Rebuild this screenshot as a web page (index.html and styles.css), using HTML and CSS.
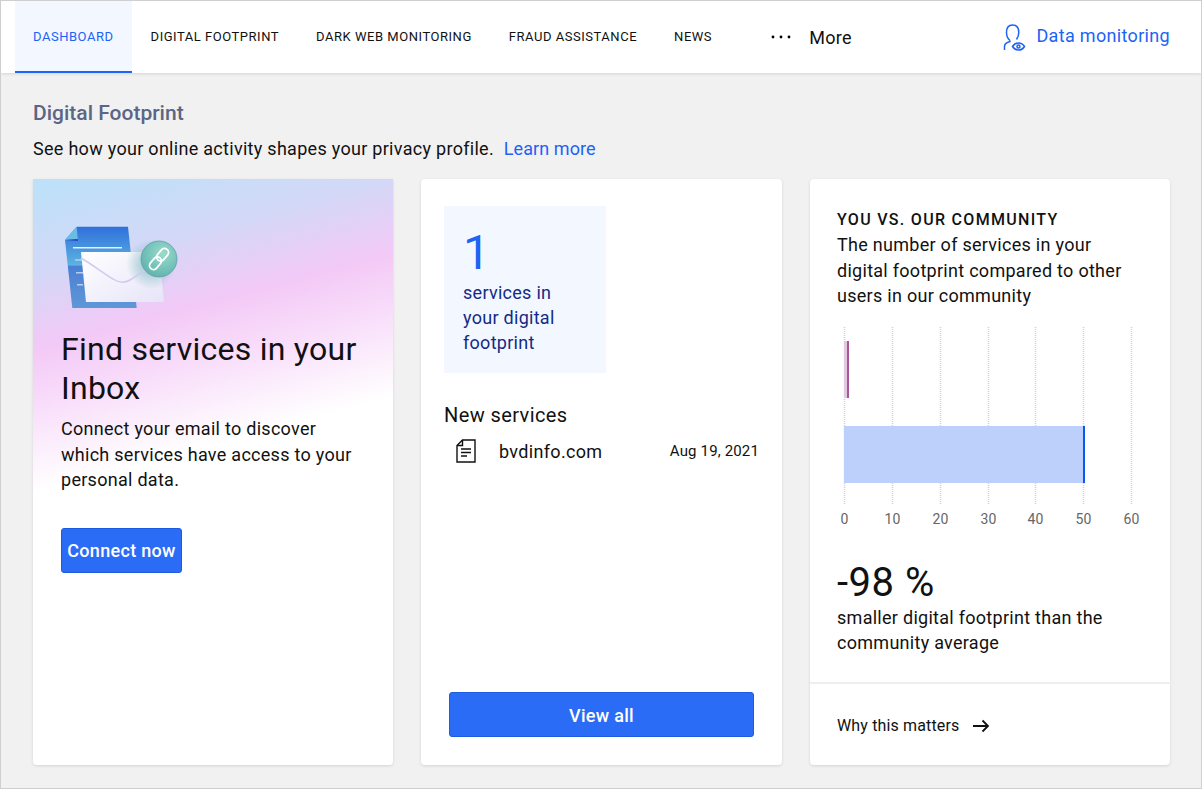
FILE: index.html
```html
<!DOCTYPE html>
<html lang="en">
<head>
    <meta charset="UTF-8">
    <title>Digital Footprint</title>
    <link rel="stylesheet" href="styles.css">
</head>
<body>
    <div class="window">
        <!-- Top navigation -->
        <nav class="topbar">
            <a class="tab active">Dashboard</a>
            <a class="tab">Digital Footprint</a>
            <a class="tab">Dark Web Monitoring</a>
            <a class="tab">Fraud Assistance</a>
            <a class="tab">News</a>
            <div class="more">
                <svg class="dots" width="20" height="4" viewBox="0 0 20 4"><circle cx="2" cy="2" r="1.4"/><circle cx="10" cy="2" r="1.4"/><circle cx="18" cy="2" r="1.4"/></svg>
                <span>More</span>
            </div>
            <a class="monitoring">
                <svg width="24" height="27" viewBox="0 0 24 27" fill="none" stroke="#1d63f5" stroke-width="1.5">
                    <path d="M7 16.500 C4.500 14.500 3.500 11.500 3.500 8.500 C3.500 4 5.500 1 9.500 1 C13.500 1 15.800 4 15.800 8.500 C15.800 11.500 14.800 13.500 13.500 15.500"/>
                    <path d="M7 16.500 L7 17.500 C3.500 18.500 1.500 20 1.500 22.500 L1.500 26"/>
                    <path d="M9.500 22.500 C11 20 13 19 15.500 19 C18 19 20 20 21.500 22.500 C20 25 18 26 15.500 26 C13 26 11 25 9.500 22.500 Z"/>
                    <circle cx="15.500" cy="22.500" r="1.500"/>
                </svg>
                <span>Data monitoring</span>
            </a>
        </nav>

        <main class="content">
            <h1 class="page-title">Digital Footprint</h1>
            <p class="page-intro">See how your online activity shapes your privacy profile. <a class="link">Learn more</a></p>

            <div class="cards">
                <!-- Inbox card -->
                <section class="card card-inbox">
                    <svg class="inbox-art" width="120" height="86" viewBox="0 0 120 86">
                        <defs>
                            <linearGradient id="docFill" x1="0" y1="0" x2="0" y2="1">
                                <stop offset="0" stop-color="#2f6fdc"/>
                                <stop offset="0.47" stop-color="#5cb4e0"/>
                                <stop offset="0.49" stop-color="#4a80d4"/>
                                <stop offset="1" stop-color="#5f97d6"/>
                            </linearGradient>
                            <linearGradient id="mailFill" x1="0" y1="0" x2="1" y2="1">
                                <stop offset="0" stop-color="#ffffff"/>
                                <stop offset="1" stop-color="#e6e4f8"/>
                            </linearGradient>
                            <radialGradient id="linkFill" cx="0.6" cy="0.35" r="0.7">
                                <stop offset="0" stop-color="#9adccb"/>
                                <stop offset="1" stop-color="#5fb2ae"/>
                            </radialGradient>
                            <radialGradient id="linkShade">
                                <stop offset="0.4" stop-color="#7fb8c0" stop-opacity="0.55"/>
                                <stop offset="1" stop-color="#7fb8c0" stop-opacity="0"/>
                            </radialGradient>
                        </defs>
                        <path d="M15.700 0.700 L67 0.700 L75.700 82 L11.300 82 L4 14 Z" fill="url(#docFill)"/>
                        <path d="M4 14 L15.700 0.700 L16.700 13 Z" fill="#6bbbe6"/>
                        <path d="M4 14 L16.700 13 L17 15 Z" fill="#2546c8"/>
                        <path d="M12 21.700 L61 21.700" stroke="#e4f2fb" stroke-width="1.500"/>
                        <path d="M14 34 L21 34 M15 46.700 L22 46.700 M16 58.700 L22 58.700" stroke="#b9cdf0" stroke-width="1.500"/>
                        <path d="M20 26 L98 26 L103 76 L25 76 Z" fill="url(#mailFill)"/>
                        <circle cx="90" cy="38" r="25" fill="url(#linkShade)"/>
                        <path d="M20 32 C32 39 42 47 52 53 C58 57 64 57 69 54 L84 44" fill="none" stroke="#cfcaf0" stroke-width="1.500"/>
                        <circle cx="98" cy="33" r="18" fill="url(#linkFill)" stroke="#5d9fa8" stroke-width="0.800"/>
                        <g fill="none" stroke="#ffffff" stroke-width="1.800" transform="rotate(-50 98 33)">
                            <rect x="85.500" y="29" width="14" height="8" rx="4"/>
                            <rect x="96.500" y="29" width="14" height="8" rx="4"/>
                        </g>
                    </svg>
                    <h2 class="inbox-title">Find services in your Inbox</h2>
                    <p class="inbox-text">Connect your email to discover which services have access to your personal data.</p>
                    <button class="btn btn-connect">Connect now</button>
                </section>

                <!-- Services card -->
                <section class="card card-services">
                    <div class="count-box">
                        <div class="count">1</div>
                        <div class="count-label">services in your digital footprint</div>
                    </div>
                    <h3 class="new-title">New services</h3>
                    <div class="service-row">
                        <svg width="20" height="24" viewBox="0 0 20 24" fill="none" stroke="#111" stroke-width="1.400">
                            <path d="M6.500 1 L19 1 L19 23 L1 23 L1 6.500 Z"/>
                            <path d="M6.500 1 L6.500 6.500 L1 6.500"/>
                            <path d="M5 10 L15 10 M5 13.500 L15 13.500 M5 17 L11 17"/>
                        </svg>
                        <span class="service-name">bvdinfo.com</span>
                        <span class="service-date">Aug 19, 2021</span>
                    </div>
                    <button class="btn btn-view">View all</button>
                </section>

                <!-- Community card -->
                <section class="card card-community">
                    <div class="community-body">
                        <h3 class="community-title">You vs. our community</h3>
                        <p class="community-text">The number of services in your digital footprint compared to other users in our community</p>
                        <svg class="chart" width="310" height="206" viewBox="0 0 310 206">
                            <g stroke="#ccccf5" stroke-width="1.500" stroke-dasharray="1 1">
                                <path d="M7.500 0 V177"/>
                                <path d="M55.500 0 V177"/>
                                <path d="M103.500 0 V177"/>
                                <path d="M151.500 0 V177"/>
                                <path d="M198.500 0 V177"/>
                                <path d="M246.500 0 V177"/>
                                <path d="M294.500 0 V177"/>
                            </g>
                            <rect x="7" y="14" width="5" height="57" fill="#e3c8e2"/>
                            <rect x="10" y="14" width="2" height="57" fill="#a8559c"/>
                            <rect x="7" y="99" width="241" height="57" fill="#b9ccfb" fill-opacity="0.95"/>
                            <rect x="246" y="99" width="2" height="57" fill="#0f55f0"/>
                            <g class="chart-label" text-anchor="middle">
                                <text x="7.500" y="197">0</text>
                                <text x="55.500" y="197">10</text>
                                <text x="103.500" y="197">20</text>
                                <text x="151.500" y="197">30</text>
                                <text x="198.500" y="197">40</text>
                                <text x="246.500" y="197">50</text>
                                <text x="294.500" y="197">60</text>
                            </g>
                        </svg>
                        <div class="percent">-98 %</div>
                        <p class="percent-text">smaller digital footprint than the community average</p>
                    </div>
                    <a class="why">
                        <span>Why this matters</span>
                        <svg width="18" height="14" viewBox="0 0 18 14" fill="none" stroke="#111" stroke-width="1.800"><path d="M1 7 H16 M10.500 1.500 L16 7 L10.500 12.500"/></svg>
                    </a>
                </section>
            </div>
        </main>
    </div>
</body>
</html>
```

FILE: styles.css
```css
* {
    box-sizing: border-box;
}

body {
    margin: 0;
    font-family: Roboto, "Liberation Sans", sans-serif;
    color: #111;
}

.window {
    width: 1202px;
    height: 789px;
    border: 1px solid #cfcfcf;
    background-color: #f1f1f1;
    overflow: hidden;
}

/* Top navigation */
.topbar {
    display: flex;
    align-items: stretch;
    height: 72px;
    padding-left: 14px;
    background-color: #fff;
    box-shadow: 0 1px 3px rgba(0, 0, 0, 0.12);
}

.tab {
    display: flex;
    align-items: center;
    padding: 0 18px;
    margin-right: 1px;
    border-bottom: 2px solid transparent;
    font-size: 13px;
    letter-spacing: 0.53px;
    text-transform: uppercase;
    color: #111;
}

.tab.active {
    color: #1d63f5;
    background-color: #f3f7ff;
    border-bottom-color: #1d63f5;
}

.more {
    display: flex;
    align-items: center;
    gap: 18px;
    margin-left: 40px;
    font-size: 18px;
    letter-spacing: 0.3px;
}

.monitoring {
    display: flex;
    align-items: center;
    gap: 9px;
    margin-left: auto;
    margin-right: 31px;
    font-size: 18px;
    letter-spacing: 0.33px;
    color: #1d63f5;
}

.monitoring span {
    margin-bottom: 4px;
}

/* Page content */
.content {
    padding: 28px 31px 0 32px;
}

.page-title {
    margin: 0;
    font-size: 21px;
    line-height: 24px;
    font-weight: 500;
    color: #5b6684;
}

.page-intro {
    margin: 12px 0 0;
    font-size: 18px;
    line-height: 24px;
    letter-spacing: 0.29px;
}

.link {
    margin-left: 5px;
    letter-spacing: 0.1px;
    color: #1d63f5;
}

.cards {
    display: flex;
    gap: 28px;
    margin-top: 18px;
}

.card {
    display: flex;
    flex-direction: column;
    align-items: flex-start;
    width: 360px;
    height: 586px;
    background-color: #fff;
    border-radius: 4px;
    box-shadow: 0 1px 3px rgba(0, 0, 0, 0.12);
}

.btn {
    border: 1px solid #1d5be0;
    border-radius: 3px;
    background-color: #2b6cf6;
    color: #fff;
    font-family: inherit;
    font-size: 18px;
    font-weight: 500;
    letter-spacing: 0.3px;
}

/* Inbox card */
.card-inbox {
    padding: 47px 28px 0;
    border-radius: 0 0 4px 4px;
    background: linear-gradient(165deg, #bbe2f8 0%, #d3d8f8 14%, #f3c9f6 25%, #f8dcfa 33%, #fff 46%);
}

.inbox-title {
    margin: 18px 0 0;
    font-size: 32px;
    line-height: 39px;
    font-weight: 400;
    letter-spacing: 0.25px;
}

.inbox-text {
    margin: 8px 0 0;
    font-size: 18px;
    line-height: 25.500px;
    letter-spacing: 0.28px;
}

.btn-connect {
    width: 121px;
    height: 45px;
    margin-top: 35px;
    padding: 0;
}

/* Services card */
.card-services {
    width: 361px;
    padding: 27px 28px 28px 23px;
}

.count-box {
    width: 162px;
    height: 167px;
    padding: 19px 19px 0;
    background-color: #f3f7ff;
    color: #142a84;
}

.count {
    font-size: 48px;
    line-height: 55px;
    color: #1d63f5;
}

.count-label {
    font-size: 18px;
    line-height: 25px;
    letter-spacing: 0.28px;
}

.new-title {
    margin: 30px 0 0;
    font-size: 20px;
    line-height: 24px;
    font-weight: 400;
    letter-spacing: 0.4px;
}

.service-row {
    display: flex;
    align-items: center;
    width: 315px;
    margin-top: 12px;
    padding-left: 12px;
}

.service-name {
    margin-left: 23px;
    font-size: 18px;
    letter-spacing: 0.33px;
}

.service-date {
    margin-left: auto;
    font-size: 15px;
    letter-spacing: 0.15px;
}

.btn-view {
    width: 305px;
    height: 45px;
    margin: auto 0 0 5px;
    padding: 1px 0 0;
}

/* Community card */
.card-community {
    padding: 0;
}

.community-body {
    height: 505px;
    padding: 32px 27px 0;
    border-bottom: 2px solid #eee;
}

.community-title {
    margin: 0;
    font-size: 16px;
    line-height: 18px;
    font-weight: 500;
    letter-spacing: 1.300px;
    text-transform: uppercase;
}

.community-text {
    margin: 3px 0 0;
    font-size: 18px;
    line-height: 25.500px;
    letter-spacing: 0.28px;
}

.chart {
    display: block;
    margin: 18px 0 0;
}

.chart-label {
    font-size: 14px;
    letter-spacing: 0.2px;
    fill: #666;
}

.percent {
    margin-top: 28px;
    font-size: 40px;
    line-height: 44px;
    letter-spacing: 0.5px;
}

.percent-text {
    margin: 0;
    font-size: 18px;
    line-height: 25.500px;
    letter-spacing: 0.28px;
}

.why {
    display: flex;
    align-items: center;
    gap: 13px;
    margin: 32px 0 0 27px;
    font-size: 16px;
    letter-spacing: 0.15px;
}
```
